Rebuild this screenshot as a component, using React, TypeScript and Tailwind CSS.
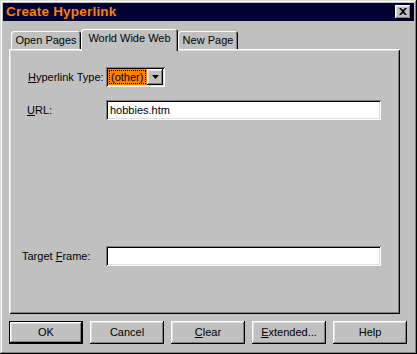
import React from 'react'

const font = "font-['Liberation_Sans',Arial,sans-serif]"

const raised =
  'bg-[#c0c0c0] shadow-[inset_-1px_-1px_#000,inset_1px_1px_#fff,inset_-2px_-2px_#808080,inset_2px_2px_#dfdfdf]'
const sunken =
  'bg-white shadow-[inset_1px_1px_#808080,inset_-1px_-1px_#fff,inset_2px_2px_#000,inset_-2px_-2px_#dfdfdf]'

const Tab = ({ label, active, width }: { label: string; active?: boolean; width: string }) => (
  <div
    className={
      active
        ? `relative z-10 ${width} h-[22px] -mb-[2px] pb-[3px] flex items-center justify-center bg-[#c0c0c0] rounded-t-[3px] shadow-[inset_1px_1px_#fff,inset_-1px_0_#000,inset_-2px_0_#808080]`
        : `${width} h-[18px] pt-[1px] flex items-center justify-center bg-[#c0c0c0] rounded-t-[3px] shadow-[inset_1px_1px_#fff,inset_-1px_0_#000,inset_-2px_0_#808080]`
    }
  >
    <span className="text-[11px] text-black leading-none">{label}</span>
  </div>
)

const Button = ({ children, isDefault }: { children: React.ReactNode; isDefault?: boolean }) => (
  <button
    className={
      isDefault
        ? 'w-[74px] h-[23px] border border-black p-0'
        : 'w-[74px] h-[23px] p-0'
    }
  >
    <div className={`w-full h-full flex items-center justify-center text-[11px] text-black ${raised}`}>
      {children}
    </div>
  </button>
)

export default function App() {
  return (
    <div
      className={`${font} w-[417px] h-[354px] p-[3px] flex flex-col bg-[#c0c0c0] shadow-[inset_-1px_-1px_#000,inset_1px_1px_#dfdfdf,inset_-2px_-2px_#808080,inset_2px_2px_#fff]`}
    >
      {/* title bar */}
      <div className="h-[18px] flex items-center justify-between pl-[3px] pr-[3px] bg-[#000033]">
        <span className="text-[13.5px] font-bold text-[#ff8000] leading-none tracking-[0.2px]">
          Create Hyperlink
        </span>
        <div className={`w-[16px] h-[14px] flex items-center justify-center ${raised}`}>
          <svg width="8" height="7" viewBox="0 0 8 7" className="-mt-[1px]">
            <path d="M0 0h2l2 2 2-2h2L5 3.5 8 7H6L4 5 2 7H0l3-3.5z" fill="#000" />
          </svg>
        </div>
      </div>

      {/* tabs */}
      <div className="mt-[8px] ml-[8px] h-[20px] flex items-end">
        <Tab label="Open Pages" width="w-[70px]" />
        <Tab label="World Wide Web" width="w-[97px]" active />
        <Tab label="New Page" width="w-[60px]" />
      </div>

      {/* panel */}
      <div className="ml-[6px] w-[391px] h-[265px] pt-[18px] flex flex-col bg-[#c0c0c0] shadow-[inset_1px_1px_#fff,inset_-1px_-1px_#000,inset_2px_2px_#dfdfdf,inset_-2px_-2px_#808080]">
        <div className="flex items-center h-[20px]">
          <span className="w-[97px] pl-[19px] text-[11px] text-black">
            <span className="underline underline-offset-[1px]">H</span>yperlink Type:
          </span>
          <div className={`w-[59px] h-[20px] p-[2px] flex ${sunken}`}>
            <div className="flex-1 bg-[#ff8000] p-[1px] flex">
              <div className="flex-1 border border-dotted border-black flex items-center pl-[1px] text-[11px] text-black leading-none">
                (other)
              </div>
            </div>
            <div className={`w-[16px] h-full flex items-center justify-center ${raised}`}>
              <svg width="7" height="4" viewBox="0 0 7 4">
                <path d="M0 0h7L3.5 4z" fill="#000" />
              </svg>
            </div>
          </div>
        </div>

        <div className="flex items-center h-[20px] mt-[13px]">
          <span className="w-[97px] pl-[18px] text-[11px] text-black">
            <span className="underline underline-offset-[1px]">U</span>RL:
          </span>
          <div className={`w-[275px] h-[20px] flex items-center pl-[4px] text-[11px] text-black ${sunken}`}>
            hobbies.htm
          </div>
        </div>

        <div className="flex items-center h-[20px] mt-[126px]">
          <span className="w-[97px] pl-[13px] text-[11px] text-black">
            Target <span className="underline underline-offset-[1px]">F</span>rame:
          </span>
          <div className={`w-[275px] h-[20px] ${sunken}`} />
        </div>
      </div>

      {/* buttons */}
      <div className="mt-[7px] ml-[6px] flex gap-[7px]">
        <Button isDefault>OK</Button>
        <Button>Cancel</Button>
        <Button>
          <span>
            <span className="underline underline-offset-[1px]">C</span>lear
          </span>
        </Button>
        <Button>
          <span>
            <span className="underline underline-offset-[1px]">E</span>xtended...
          </span>
        </Button>
        <Button>Help</Button>
      </div>
    </div>
  )
}
